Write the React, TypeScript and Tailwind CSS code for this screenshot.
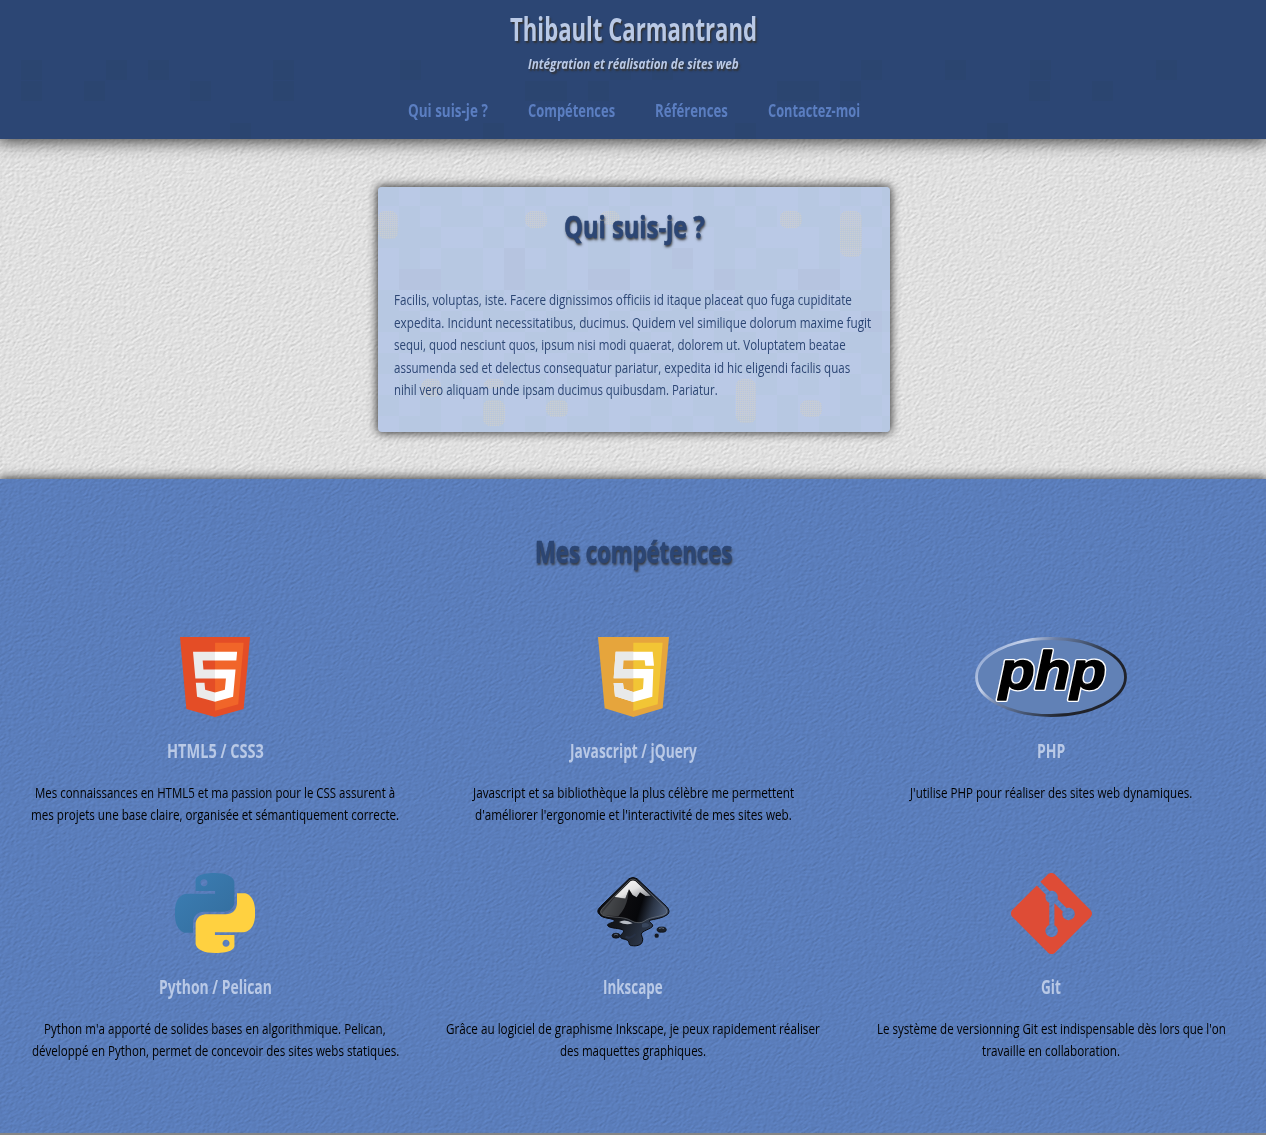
import { useLayoutEffect, useRef, useState } from "react";
import type { ReactNode } from "react";
import { SiGit } from "react-icons/si";

/* A single line of text condensed horizontally to a given width. */
function Line({ w, children }: { w: number; children: ReactNode }) {
  const ref = useRef<HTMLSpanElement>(null);
  const [scale, setScale] = useState(0.8);
  useLayoutEffect(() => {
    const fit = () => {
      if (ref.current && ref.current.offsetWidth) setScale(w / ref.current.offsetWidth);
    };
    fit();
    document.fonts?.ready.then(fit);
  }, [w]);
  return (
    <span className="block" style={{ width: w }}>
      <span ref={ref} className="inline-block origin-left whitespace-nowrap align-top" style={{ transform: `scaleX(${scale})` }}>
        {children}
      </span>
    </span>
  );
}

/* Embossed paper grain, running diagonally. */
function Paper({ id, color, depth }: { id: string; color: string; depth: number }) {
  return (
    <div className="pointer-events-none absolute inset-0 -z-10 overflow-hidden" aria-hidden="true">
      <svg className="absolute top-1/2 left-1/2 h-[1700px] w-[1700px] -translate-x-1/2 -translate-y-1/2 -rotate-30">
        <filter id={id} x="0" y="0" width="100%" height="100%" colorInterpolationFilters="sRGB">
          <feTurbulence type="fractalNoise" baseFrequency="0.28 0.48" numOctaves="3" seed="4" />
          <feColorMatrix values="0 0 0 0 0  0 0 0 0 0  0 0 0 0 0  1 0 0 0 0" />
          <feDiffuseLighting surfaceScale={depth} diffuseConstant="1.15" lightingColor={color}>
            <feDistantLight azimuth="255" elevation="60" />
          </feDiffuseLighting>
        </filter>
        <rect width="100%" height="100%" filter={`url(#${id})`} />
      </svg>
    </div>
  );
}

const tileRows = [
  "1011010100101101010010101",
  "0101101011010001101011010",
  "1110010110110100110001101",
  "0101102010110120101101011",
  "0221102110220110211022011",
  "1010110101001011010110110",
  "1101011011010110100111021",
  "0110100110011010110100110",
  "1001101001010110011010011",
  "0101001101001101001010101",
  "1010010010100101100100110",
  "0110110101101010110101101",
];
const blobs = [
  [0, 24, 20, 28],
  [147, 24, 22, 17],
  [222, 24, 20, 14],
  [402, 24, 22, 17],
  [462, 24, 22, 46],
  [43, 192, 20, 18],
  [106, 192, 20, 10],
  [105, 213, 22, 26],
  [168, 213, 22, 17],
  [358, 192, 20, 44],
  [422, 213, 22, 17],
];

function CardTiles() {
  return (
    <svg className="pointer-events-none absolute inset-0 -z-10 h-full w-full rounded-[4px]" aria-hidden="true">
      <defs>
        <pattern id="dither" width="2" height="2" patternUnits="userSpaceOnUse">
          <rect width="1" height="1" fill="#d3d0c4" />
          <rect x="1" y="1" width="1" height="1" fill="#c4c8cc" />
        </pattern>
      </defs>
      {tileRows.flatMap((row, r) =>
        row.split("").map((v, c) =>
          v === "0" ? null : (
            <rect key={`${r}-${c}`} x={c * 21} y={r * 21 - 2} width="21" height="21" fill={v === "1" ? "#b6c7e0" : "#b4c2de"} opacity="0.75" />
          ),
        ),
      )}
      {blobs.map(([x, y, w, h], i) => (
        <rect key={i} x={x} y={y} width={w} height={h} rx="7" fill="url(#dither)" opacity="0.85" />
      ))}
    </svg>
  );
}

/* Barely visible darker tiles of the header band. */
const headerTiles = [
  [21, 60], [106, 60], [148, 60], [273, 60], [400, 60], [610, 60], [652, 60], [861, 60], [945, 60], [1030, 60], [1156, 60],
  [21, 81], [84, 81], [190, 81], [273, 81], [525, 81], [546, 81], [588, 81], [777, 81], [798, 81], [840, 81], [1029, 81], [1092, 81],
  [230, 123], [483, 123], [735, 123], [987, 123],
];

function HeaderTiles() {
  return (
    <svg className="pointer-events-none absolute inset-0 -z-10 h-full w-full" aria-hidden="true">
      {headerTiles.map(([x, y]) => (
        <rect key={`${x}-${y}`} x={x} y={y} width="21" height="20" fill="#2a446c" opacity="0.5" />
      ))}
    </svg>
  );
}

function Html5Logo() {
  return (
    <svg viewBox="30 0 451 512" className="h-20 w-[70px]" preserveAspectRatio="none">
      <path fill="#e44d26" d="M71 460 30 0h451l-41 460-185 52z" />
      <path fill="#f16529" d="m256 472 149-41 35-394H256z" />
      <path fill="#ebebeb" d="M256 208h-75l-5-58h80V94H114l1 15 14 156h127zM256 355l-64-17-4-45h-56l8 89 116 32z" />
      <path fill="#fff" d="M255 208v57h71l-7 73-64 17v59l117-32 16-174zM255 94v56h138l5-56z" />
    </svg>
  );
}

function JsLogo() {
  return (
    <svg viewBox="39 36 213 240" className="h-20 w-[71px]" preserveAspectRatio="none">
      <path fill="#e6a53c" d="M39 36h213l-19 214-88 26-86-26z" />
      <path fill="#f2c535" d="M145 53h88l-15 185-73 20z" />
      <path fill="#fff" d="M92 80h111l4 42h-26l-2-16h-64l-1 26h91l-3 83-57 16-55-17-4-40h28l2 17 28 10 30-9 2-32H86z" />
      <path fill="#e8e9ea" d="M92 80h53v26h-30l-1 26h31v28H86zM86 174h28l2 17 29 10v30l-55-17z" />
    </svg>
  );
}

function PhpLogo() {
  return (
    <svg viewBox="0 0 152 80" className="h-20 w-[152px]">
      <defs>
        <linearGradient id="ring" gradientUnits="userSpaceOnUse" x1="20" y1="0" x2="110" y2="80">
          <stop offset="0" stopColor="#8ba3cf" />
          <stop offset="0.2" stopColor="#c6d3ec" />
          <stop offset="0.38" stopColor="#6d80a6" />
          <stop offset="0.6" stopColor="#465672" />
          <stop offset="0.85" stopColor="#20232b" />
          <stop offset="1" stopColor="#20232b" />
        </linearGradient>
      </defs>
      <ellipse cx="76" cy="40" rx="74.5" ry="38.5" fill="#6181b6" stroke="url(#ring)" strokeWidth="2.8" />
      <g fontFamily="'Liberation Sans', sans-serif" fontWeight="700" fontStyle="italic" fontSize="54" strokeLinejoin="round">
        <text x="24" y="51.5" textLength="107" lengthAdjust="spacingAndGlyphs" fill="#fff" stroke="#fff" strokeWidth="4">
          php
        </text>
        <text x="24" y="51.5" textLength="107" lengthAdjust="spacingAndGlyphs" fill="#000" stroke="#000" strokeWidth="1.4">
          php
        </text>
      </g>
    </svg>
  );
}

const snake =
  "M14.25.18l.9.2.73.26.59.3.45.32.34.34.25.34.16.33.1.3.04.26.02.2-.01.13V8.5l-.05.63-.13.55-.21.46-.26.38-.3.31-.33.25-.35.19-.35.14-.33.1-.3.07-.26.04-.21.02H8.77l-.69.05-.59.14-.5.22-.41.27-.33.32-.27.35-.2.36-.15.37-.1.35-.07.32-.04.27-.02.21v3.06H3.17l-.21-.03-.28-.07-.32-.12-.35-.18-.36-.26-.36-.36-.35-.46-.32-.59-.28-.73-.21-.88-.14-1.05-.05-1.23.06-1.22.16-1.04.24-.87.32-.71.36-.57.4-.44.42-.33.42-.24.4-.16.36-.1.32-.05.24-.01h.16l.06.01h8.16v-.83H6.18l-.01-2.75-.02-.37.05-.34.11-.31.17-.28.25-.26.31-.23.38-.2.44-.18.51-.15.58-.12.64-.1.71-.06.77-.04.84-.02 1.27.05zm-6.3 1.98l-.23.33-.08.41.08.41.23.34.33.22.41.09.41-.09.33-.22.23-.34.08-.41-.08-.41-.23-.33-.33-.22-.41-.09-.41.09z";

function PythonLogo() {
  return (
    <svg viewBox="0 0 24 24" className="size-20">
      <defs>
        <linearGradient id="py" x1="0" y1="0" x2="1" y2="1">
          <stop offset="0" stopColor="#3c7fb5" />
          <stop offset="1" stopColor="#336c9c" />
        </linearGradient>
      </defs>
      <path d={snake} fill="url(#py)" fillRule="evenodd" />
      <path d={snake} fill="#ffd140" fillRule="evenodd" transform="rotate(180 12 12)" />
    </svg>
  );
}

function InkscapeLogo() {
  return (
    <svg viewBox="25 24 240 240" className="size-20">
      <defs>
        <linearGradient id="ink" x1="0" y1="0.4" x2="1" y2="0.6">
          <stop offset="0" stopColor="#4a4c50" />
          <stop offset="0.35" stopColor="#0c0c0f" />
          <stop offset="0.62" stopColor="#06070a" />
          <stop offset="0.8" stopColor="#2c3647" />
          <stop offset="1" stopColor="#4a5a75" />
        </linearGradient>
        <linearGradient id="snow" x1="0" y1="0" x2="1" y2="1">
          <stop offset="0" stopColor="#fff" />
          <stop offset="0.5" stopColor="#e4e4e4" />
          <stop offset="1" stopColor="#737780" />
        </linearGradient>
        <linearGradient id="drip" x1="0" y1="0" x2="1" y2="0.4">
          <stop offset="0" stopColor="#08080a" />
          <stop offset="0.5" stopColor="#15181e" />
          <stop offset="1" stopColor="#35435b" />
        </linearGradient>
      </defs>
      <path
        d="M133 41q12-7 24 0l89 84q13 15 2 24c-14 11-39 13-53 17-4 7 10 8 9 17-3 9-34 14-34 25 0 7 7 10 3 22-3 11-18 14-32 12-11-1-5-11-13-16-7-5-20-3-21-11-1-7 13-12 9-19-6-7-43-5-47-14-3-9 22-8 20-15-2-8-35-5-44-18-10-9-5-17 2-24z"
        fill="url(#drip)"
        stroke="#0a0b0f"
        strokeWidth="3"
      />
      <path d="M136 45q9-5 18 0l88 83q9 11 2 18c-9 8-36 9-53 16-10 3-15 12-28 11-22 0-22-10-46-14-22-4-61-2-67-12-5-8 0-13 4-18z" fill="url(#ink)" stroke="#8d9096" strokeWidth="1.4" />
      <path d="M137 49q8-5 16 0l45 43-15 1-17-11-10 15-12-7-11-17-11 28-32-5z" fill="url(#snow)" />
      <path d="M90 97l32 3 11-27-4 27q-6 30-28 54l-44-3q-7-3-2-10z" fill="#54565a" opacity="0.6" />
      <path d="M103 171q18-11 41 4-21 7-41-4" fill="#b7bcc4" />
      <path d="M123 215q12 9 30-8" stroke="#263044" strokeWidth="7" fill="none" />
      <path d="M172 177q14-8 22 3-7 10-22 7z" fill="#38465d" />
      <ellipse cx="94" cy="212" rx="12" ry="7.5" fill="#171b22" stroke="#090a0d" strokeWidth="2" />
      <ellipse cx="231" cy="194" rx="14" ry="8" fill="#1b2029" stroke="#090a0d" strokeWidth="2" />
      <circle cx="216" cy="212" r="6.5" fill="#151922" />
      <path d="M88 210q6-4 12 0M223 191q8-5 15 0" stroke="#77839a" strokeWidth="2" fill="none" />
    </svg>
  );
}

const skills: { title: [string, number]; lines: [string, number][]; logo: ReactNode }[] = [
  {
    title: ["HTML5 / CSS3", 97],
    lines: [
      ["Mes connaissances en HTML5 et ma passion pour le CSS assurent à", 360],
      ["mes projets une base claire, organisée et sémantiquement correcte.", 368],
    ],
    logo: <Html5Logo />,
  },
  {
    title: ["Javascript / jQuery", 127],
    lines: [
      ["Javascript et sa bibliothèque la plus célèbre me permettent", 321],
      ["d'améliorer l'ergonomie et l'interactivité de mes sites web.", 317],
    ],
    logo: <JsLogo />,
  },
  {
    title: ["PHP", 28],
    lines: [["J'utilise PHP pour réaliser des sites web dynamiques.", 282]],
    logo: <PhpLogo />,
  },
  {
    title: ["Python / Pelican", 113],
    lines: [
      ["Python m'a apporté de solides bases en algorithmique. Pelican,", 342],
      ["développé en Python, permet de concevoir des sites webs statiques.", 367],
    ],
    logo: <PythonLogo />,
  },
  {
    title: ["Inkscape", 60],
    lines: [
      ["Grâce au logiciel de graphisme Inkscape, je peux rapidement réaliser", 374],
      ["des maquettes graphiques.", 146],
    ],
    logo: <InkscapeLogo />,
  },
  {
    title: ["Git", 20],
    lines: [
      ["Le système de versionning Git est indispensable dès lors que l'on", 349],
      ["travaille en collaboration.", 138],
    ],
    logo: <SiGit className="size-[81px]" color="#de4c36" />,
  },
];

const nav: [string, number][] = [
  ["Qui suis-je ?", 80],
  ["Compétences", 87],
  ["Références", 73],
  ["Contactez-moi", 92],
];

const about: [string, number][] = [
  ["Facilis, voluptas, iste. Facere dignissimos officiis id itaque placeat quo fuga cupiditate", 458],
  ["expedita. Incidunt necessitatibus, ducimus. Quidem vel similique dolorum maxime fugit", 477],
  ["sequi, quod nesciunt quos, ipsum nisi modi quaerat, dolorem ut. Voluptatem beatae", 452],
  ["assumenda sed et delectus consequatur pariatur, expedita id hic eligendi facilis quas", 456],
  ["nihil vero aliquam unde ipsam ducimus quibusdam. Pariatur.", 324],
];

export default function App() {
  return (
    <div className="relative isolate flex h-[1135px] w-full flex-col overflow-hidden bg-[#e0e0e0] font-['Open_Sans','Noto_Sans',sans-serif]">
      <Paper id="paper" color="#e1e1e1" depth={0.38} />
      <header className="relative isolate flex h-[139px] shrink-0 flex-col items-center bg-[#2c4674] pt-1.5 pl-px shadow-[0_0_16px_2px_#333]">
        <HeaderTiles />
        <h1 className="text-[32px] leading-[46px] font-bold text-[#b9c9e6] [text-shadow:2px_2px_2px_#333]">
          <Line w={247}>Thibault Carmantrand</Line>
        </h1>
        <p className="text-[15px] leading-[22px] font-bold text-[#b9c9e6] italic [text-shadow:2px_2px_2px_#333]">
          <Line w={211}>Intégration et réalisation de sites web</Line>
        </p>
        <nav className="mt-[23px] flex gap-10 text-[17.5px] leading-[26px] font-bold text-[#5b7ec1]">
          {nav.map(([t, w]) => (
            <a key={t} href="#">
              <Line w={w}>{t}</Line>
            </a>
          ))}
        </nav>
      </header>

      <section className="relative isolate mt-12 ml-[378px] h-[245px] w-[512px] shrink-0 rounded-[4px] bg-[#bac9e6] px-4 pt-[15px] text-[#2c4674] shadow-[0_0_10px_1px_#333]">
        <CardTiles />
        <h2 className="flex justify-center text-[31px] leading-[48px] font-bold [text-shadow:1px_2px_3px_#333] [-webkit-text-stroke:0.6px_#2c4674]">
          <Line w={141}>Qui suis-je ?</Line>
        </h2>
        <div className="mt-[39px] text-[14.5px] leading-[22.5px]">
          {about.map(([t, w]) => (
            <Line key={t} w={w}>
              {t}
            </Line>
          ))}
        </div>
      </section>

      <section className="relative isolate mt-[47px] h-[654px] shrink-0 bg-[#5b7ebd] pt-12 shadow-[0_0_10px_1px_#333]">
        <Paper id="blue-paper" color="#5b7ebc" depth={0.36} />
        <h2 className="flex justify-center text-[31px] leading-[48px] font-bold text-[#2c4674] [text-shadow:1px_2px_3px_#333] [-webkit-text-stroke:0.6px_#2c4674]">
          <Line w={197}>Mes compétences</Line>
        </h2>
        <div className="mt-[62px] grid grid-cols-3 pr-1.5 pl-1.5">
          {skills.map((s) => (
            <article key={s.title[0]} className="flex h-[236px] flex-col items-center">
              <div className="flex h-20 items-center">{s.logo}</div>
              <h3 className="mt-[19px] text-[19px] leading-[30px] font-bold text-[#b9c9e6]">
                <Line w={s.title[1]}>{s.title[0]}</Line>
              </h3>
              <div className="mt-4 flex flex-col items-center text-[14.5px] leading-[22px] text-black">
                {s.lines.map(([t, w]) => (
                  <Line key={t} w={w}>
                    {t}
                  </Line>
                ))}
              </div>
            </article>
          ))}
        </div>
      </section>
      <div className="relative h-0.5 shrink-0 bg-[#858585]" />
    </div>
  );
}
